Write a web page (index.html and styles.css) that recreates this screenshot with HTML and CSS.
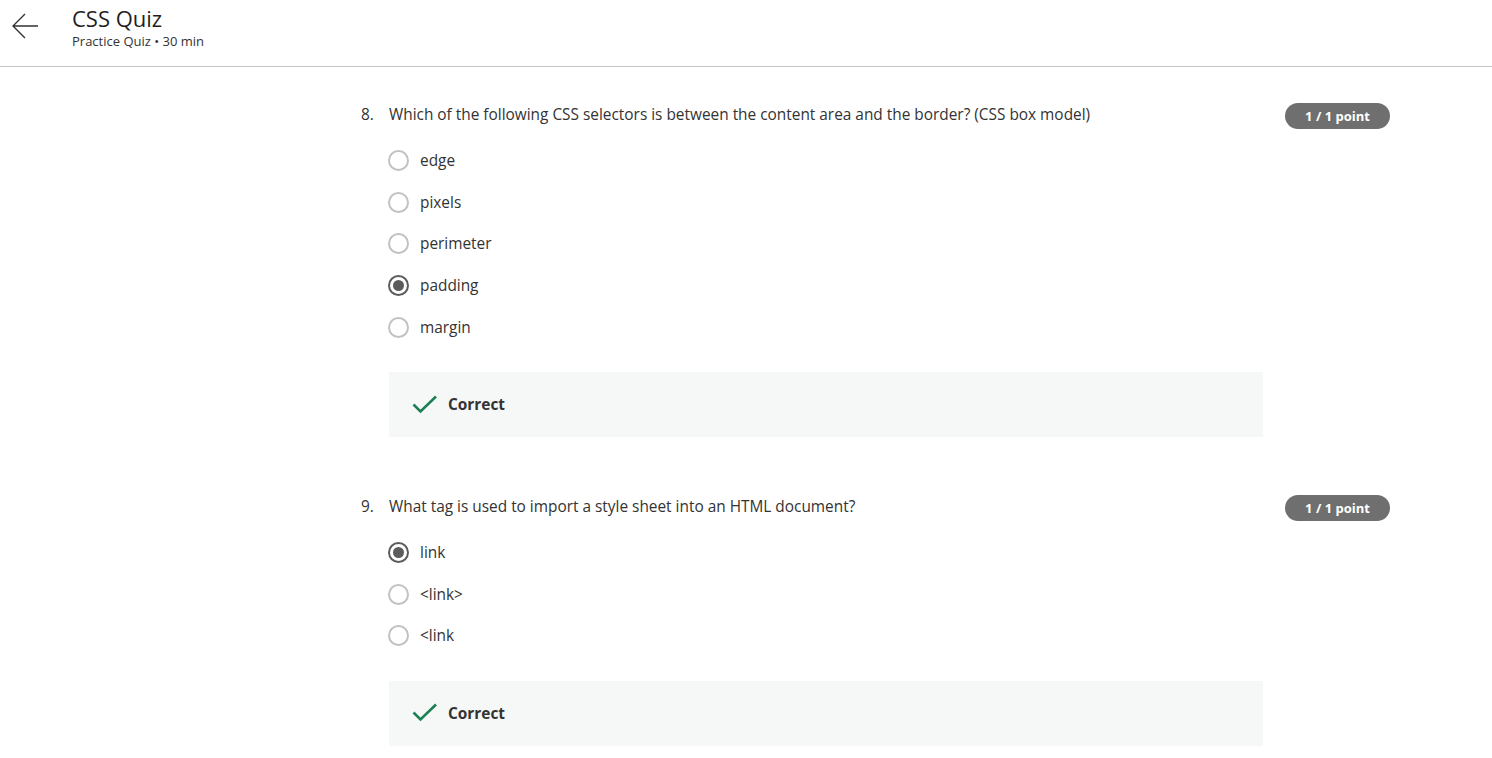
FILE: index.html
```html
<!DOCTYPE html>
<html>
<head>
<meta charset="utf-8">
<link rel="stylesheet" href="styles.css">
</head>
<body>
<header class="top">
  <div class="back">
    <svg width="28" height="28" viewBox="0 0 28 28"><path d="M27 14H2M14 2L2 14L14 26" fill="none" stroke="#333" stroke-width="1.4"/></svg>
  </div>
  <div class="titles">
    <div class="title">CSS Quiz</div>
    <div class="sub">Practice Quiz • 30 min</div>
  </div>
</header>
<main class="main">
  <section class="question">
    <div class="qnum">8.</div>
    <div class="qbody">
      <div class="qtext">Which of the following CSS selectors is between the content area and the border? (CSS box model)</div>
      <ul class="options">
        <li class="opt"><span class="radio"></span><span>edge</span></li>
        <li class="opt"><span class="radio"></span><span>pixels</span></li>
        <li class="opt"><span class="radio"></span><span>perimeter</span></li>
        <li class="opt"><span class="radio checked"></span><span>padding</span></li>
        <li class="opt"><span class="radio"></span><span>margin</span></li>
      </ul>
      <div class="feedback">
        <svg width="26" height="20" viewBox="0 0 26 20"><path d="M1.5 9.5L8.5 16.5L24 1.5" fill="none" stroke="#1d8055" stroke-width="2.6"/></svg>
        <span>Correct</span>
      </div>
    </div>
    <div class="score"><span class="badge">1 / 1 point</span></div>
  </section>
  <section class="question">
    <div class="qnum">9.</div>
    <div class="qbody">
      <div class="qtext">What tag is used to import a style sheet into an HTML document?</div>
      <ul class="options">
        <li class="opt"><span class="radio checked"></span><span>link</span></li>
        <li class="opt"><span class="radio"></span><span>&lt;link&gt;</span></li>
        <li class="opt"><span class="radio"></span><span>&lt;link</span></li>
      </ul>
      <div class="feedback">
        <svg width="26" height="20" viewBox="0 0 26 20"><path d="M1.5 9.5L8.5 16.5L24 1.5" fill="none" stroke="#1d8055" stroke-width="2.6"/></svg>
        <span>Correct</span>
      </div>
    </div>
    <div class="score"><span class="badge">1 / 1 point</span></div>
  </section>
</main>
</body>
</html>
```
FILE: styles.css
```css
* { box-sizing: border-box; }
body {
  margin: 0;
  font-family: "Open Sans", "Liberation Sans", sans-serif;
  color: #333;
  background: #fff;
}
.top {
  height: 67px;
  border-bottom: 1px solid #c4c4c4;
  display: flex;
  align-items: flex-start;
}
.back {
  width: 72px;
  padding: 12px 0 0 11px;
  height: 40px;
}
.back svg { display: block; }
.titles { padding-top: 3px; }
.title {
  font-size: 22px;
  line-height: 30px;
  color: #1f1f1f;
}
.sub {
  font-size: 13px;
  line-height: 16px;
  color: #333;
}
.main {
  padding: 36px 0 0 361px;
}
.question {
  display: flex;
  width: 1029px;
  margin-bottom: 58px;
}
.qnum {
  width: 28px;
  font-size: 15.4px;
  line-height: 24px;
}
.qbody { width: 874px; }
.qtext {
  font-size: 15.4px;
  line-height: 24px;
}
.score {
  flex: 1;
  display: flex;
  justify-content: flex-end;
  align-items: flex-start;
  padding-top: 0;
}
.badge {
  display: inline-block;
  width: 105px;
  height: 26px;
  line-height: 26px;
  border-radius: 13px;
  background: #6f6f6f;
  color: #fff;
  font-size: 13px;
  font-weight: 700;
  text-align: center;
}
.options {
  list-style: none;
  margin: 12.6px 0 0 -1px;
  padding: 0;
}
.opt {
  height: 41.7px;
  display: flex;
  align-items: center;
  font-size: 15.4px;
  color: #333;
}
.radio {
  width: 21px;
  height: 21px;
  border: 2px solid #c2c2c2;
  border-radius: 50%;
  margin-right: 11px;
  flex: none;
  display: flex;
  align-items: center;
  justify-content: center;
}
.radio.checked { border-color: #5c5c5c; }
.radio.checked::after {
  content: "";
  width: 11px;
  height: 11px;
  border-radius: 50%;
  background: #5c5c5c;
}
.feedback {
  margin-top: 24px;
  height: 65px;
  background: #f5f8f7;
  display: flex;
  align-items: center;
  padding-left: 23px;
  font-size: 15.4px;
  font-weight: 700;
  color: #333;
}
.feedback svg { margin-right: 10px; }
```
